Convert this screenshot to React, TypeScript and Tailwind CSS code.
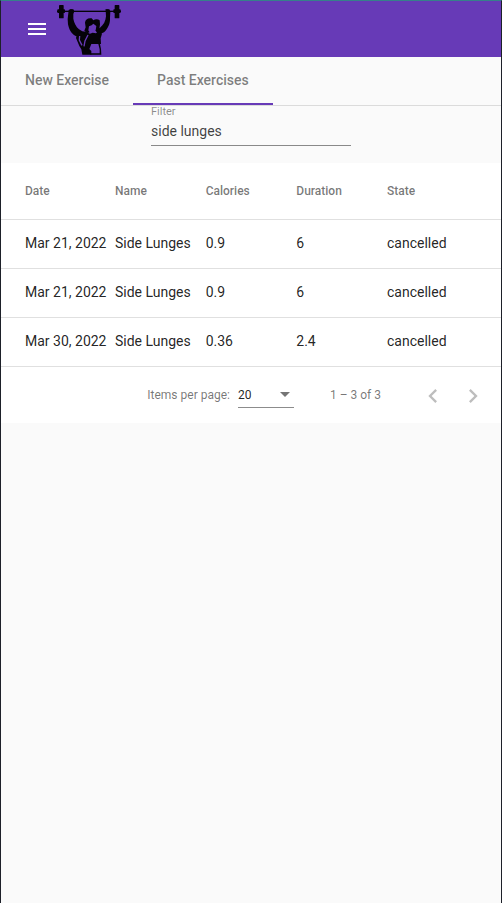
import { useState } from "react";

const rows = [
  { date: "Mar 21, 2022", name: "Side Lunges", calories: "0.9", duration: "6", state: "cancelled" },
  { date: "Mar 21, 2022", name: "Side Lunges", calories: "0.9", duration: "6", state: "cancelled" },
  { date: "Mar 30, 2022", name: "Side Lunges", calories: "0.36", duration: "2.4", state: "cancelled" },
];

function Logo() {
  return (
    <svg viewBox="171 9 192 156" className="h-[52px] w-16" role="img" aria-label="Fitness logo">
      <g fill="#050308">
        {/* barbell */}
        <rect x="171" y="32" width="192" height="4" />
        <rect x="177" y="15" width="14" height="40" rx="2" />
        <rect x="172" y="28" width="23" height="11" rx="2" />
        <rect x="344" y="15" width="14" height="40" rx="2" />
        <rect x="340" y="28" width="22" height="11" rx="2" />
        {/* raised arms */}
        <path d="M206 30l6-3 8 1 3 6-3 8v14c2 12 8 24 17 32l10 6 10 1v14l-14 2-16-3c-14-7-20-20-23-35l-1-16z" />
        <path d="M314 30l6-3 8 1 3 6-1 20c1 16-6 32-18 43l-10 4-8 2-8-12 14-8c11-8 17-20 18-34l-1-18z" />
        {/* hair and head */}
        <path d="M255 68c1-10 9-15 20-13l5 6c5-4 14-4 19 0l1 12-2 14-5 6-6-2 2-13-9-7-5 5-8 3-2 12 4 6-8 3-8-8 4-10z" />
        {/* torso */}
        <path d="M232 98l26-2 12 5 8-3 10 2 10-7 8 8-4 14 1 17h-29l-6 15 6 6v11h-27l-3-16-6-10-10-24z" />
        <path d="M271 160h28v-12l-4-16h5l3 15 1 17h-33z" />
      </g>
      <g fill="none" stroke="#673ab7" strokeWidth="4">
        <path d="M239 108l-1 12 8 16M264 105l-9 18-3 16" />
      </g>
    </svg>
  );
}

const headCell = "border-b border-black/12 font-medium";
const bodyCell = "whitespace-nowrap border-b border-black/12 pb-0.5";

export default function App() {
  const [filter, setFilter] = useState("side lunges");
  return (
    <div className="min-h-screen border-x border-t border-x-[#1d2029] border-t-[#36808a] bg-[#fafafa] font-[Roboto,sans-serif] text-sm text-black/87">
      <header className="flex h-14 items-center bg-[#673ab7] px-4">
        <button type="button" aria-label="Open menu" className="flex size-10 items-center justify-center text-white">
          <svg viewBox="0 0 24 24" className="size-6" fill="currentColor">
            <path d="M3 18h18v-2H3v2zm0-5h18v-2H3v2zm0-7v2h18V6H3z" />
          </svg>
        </button>
        <Logo />
      </header>

      <nav className="flex h-[49px] border-b border-black/12 font-medium text-black/50">
        <a href="#new" className="flex h-12 items-center border-b-2 border-transparent px-6">New Exercise</a>
        <a href="#past" aria-current="page" className="flex h-12 items-center border-b-2 border-[#673ab7] px-6">Past Exercises</a>
      </nav>

      <main>
        <div className="mx-auto flex h-[57px] w-[200px] flex-col">
          <label htmlFor="filter" className="text-[11px] leading-3 text-black/45">Filter</label>
          <input
            id="filter"
            value={filter}
            onChange={(e) => setFilter(e.target.value)}
            className="h-7 w-full border-b border-black/45 bg-transparent pb-0.5 text-sm text-black/75 outline-none"
          />
        </div>

        <table className="w-full table-fixed border-separate border-spacing-0 bg-white text-left">
          <colgroup>
            <col className="w-[114px]" />
            <col />
            <col />
            <col />
            <col className="w-[114px]" />
          </colgroup>
          <thead>
            <tr className="h-[57px] text-xs text-black/54">
              <th className={`${headCell} pl-6`}>Date</th>
              <th className={headCell}>Name</th>
              <th className={headCell}>Calories</th>
              <th className={headCell}>Duration</th>
              <th className={headCell}>State</th>
            </tr>
          </thead>
          <tbody>
            {rows.map((r, i) => (
              <tr key={i} className="h-[49px]">
                <td className={`${bodyCell} pl-6`}>{r.date}</td>
                <td className={bodyCell}>{r.name}</td>
                <td className={bodyCell}>{r.calories}</td>
                <td className={bodyCell}>{r.duration}</td>
                <td className={bodyCell}>{r.state}</td>
              </tr>
            ))}
          </tbody>
        </table>

        <div className="flex h-14 items-center justify-end bg-white pr-2 text-xs text-black/54">
          <label htmlFor="size">Items per page:</label>
          <div className="relative ml-2 w-14">
            <select id="size" defaultValue="20" className="h-[26px] w-full appearance-none border-b border-black/45 bg-transparent text-black/87 outline-none">
              <option>10</option>
              <option>20</option>
              <option>50</option>
            </select>
            <svg viewBox="0 0 10 5" className="pointer-events-none absolute right-1 top-[10px] h-[5px] w-[10px]" fill="#757575">
              <path d="M0 0h10L5 5z" />
            </svg>
          </div>
          <span className="ml-9 mr-8">1 – 3 of 3</span>
          <button type="button" disabled aria-label="Previous page" className="flex size-10 items-center justify-center pt-0.5 text-black/26">
            <svg viewBox="0 0 24 24" className="size-7" fill="currentColor">
              <path d="M15.41 7.41L14 6l-6 6 6 6 1.41-1.41L10.83 12z" />
            </svg>
          </button>
          <button type="button" disabled aria-label="Next page" className="flex size-10 items-center justify-center pt-0.5 text-black/26">
            <svg viewBox="0 0 24 24" className="size-7" fill="currentColor">
              <path d="M10 6L8.59 7.41 13.17 12l-4.58 4.59L10 18l6-6z" />
            </svg>
          </button>
        </div>
      </main>
    </div>
  );
}
